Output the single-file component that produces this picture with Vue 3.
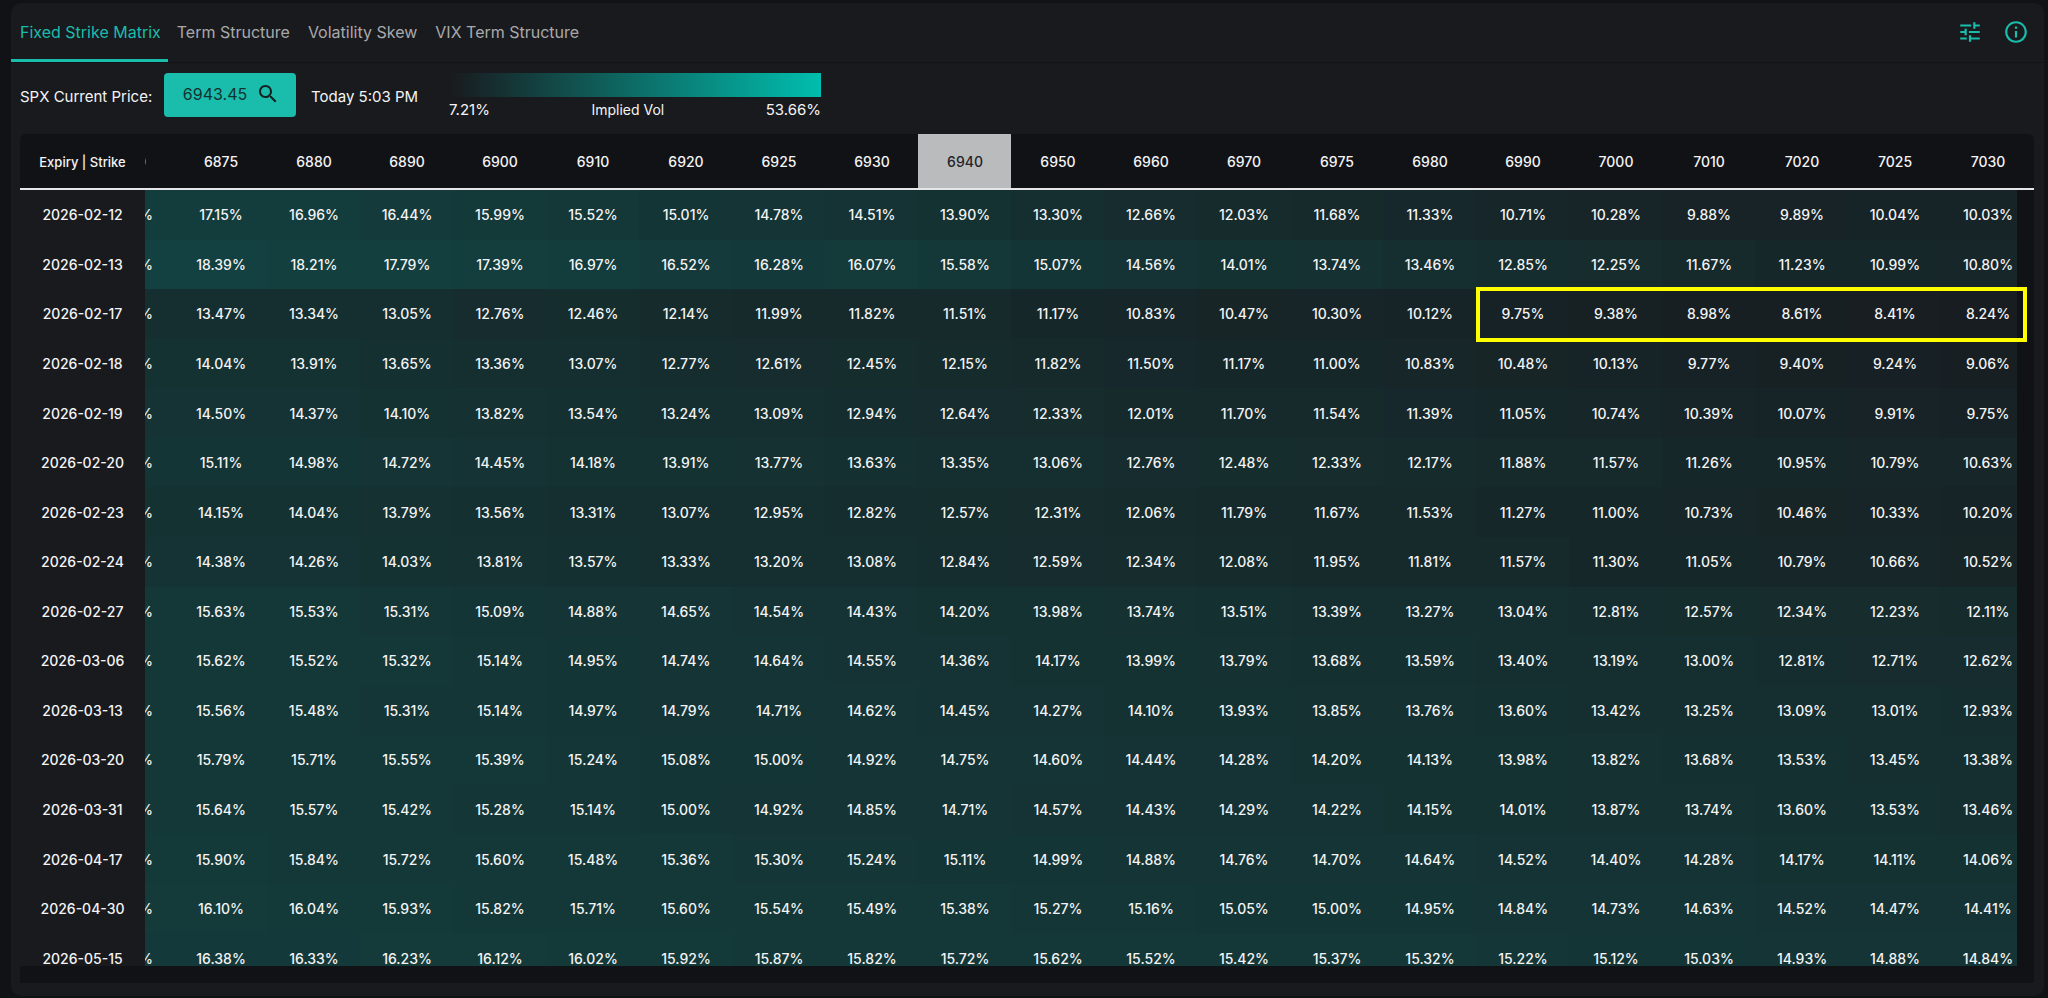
<script setup>
const tabs = ['Fixed Strike Matrix', 'Term Structure', 'Volatility Skew', 'VIX Term Structure']

const strikes = [6875, 6880, 6890, 6900, 6910, 6920, 6925, 6930, 6940, 6950, 6960, 6970, 6975, 6980, 6990, 7000, 7010, 7020, 7025, 7030]
const atmStrike = 6940

const source = `
2026-02-12 17.15 16.96 16.44 15.99 15.52 15.01 14.78 14.51 13.90 13.30 12.66 12.03 11.68 11.33 10.71 10.28 9.88 9.89 10.04 10.03
2026-02-13 18.39 18.21 17.79 17.39 16.97 16.52 16.28 16.07 15.58 15.07 14.56 14.01 13.74 13.46 12.85 12.25 11.67 11.23 10.99 10.80
2026-02-17 13.47 13.34 13.05 12.76 12.46 12.14 11.99 11.82 11.51 11.17 10.83 10.47 10.30 10.12 9.75 9.38 8.98 8.61 8.41 8.24
2026-02-18 14.04 13.91 13.65 13.36 13.07 12.77 12.61 12.45 12.15 11.82 11.50 11.17 11.00 10.83 10.48 10.13 9.77 9.40 9.24 9.06
2026-02-19 14.50 14.37 14.10 13.82 13.54 13.24 13.09 12.94 12.64 12.33 12.01 11.70 11.54 11.39 11.05 10.74 10.39 10.07 9.91 9.75
2026-02-20 15.11 14.98 14.72 14.45 14.18 13.91 13.77 13.63 13.35 13.06 12.76 12.48 12.33 12.17 11.88 11.57 11.26 10.95 10.79 10.63
2026-02-23 14.15 14.04 13.79 13.56 13.31 13.07 12.95 12.82 12.57 12.31 12.06 11.79 11.67 11.53 11.27 11.00 10.73 10.46 10.33 10.20
2026-02-24 14.38 14.26 14.03 13.81 13.57 13.33 13.20 13.08 12.84 12.59 12.34 12.08 11.95 11.81 11.57 11.30 11.05 10.79 10.66 10.52
2026-02-27 15.63 15.53 15.31 15.09 14.88 14.65 14.54 14.43 14.20 13.98 13.74 13.51 13.39 13.27 13.04 12.81 12.57 12.34 12.23 12.11
2026-03-06 15.62 15.52 15.32 15.14 14.95 14.74 14.64 14.55 14.36 14.17 13.99 13.79 13.68 13.59 13.40 13.19 13.00 12.81 12.71 12.62
2026-03-13 15.56 15.48 15.31 15.14 14.97 14.79 14.71 14.62 14.45 14.27 14.10 13.93 13.85 13.76 13.60 13.42 13.25 13.09 13.01 12.93
2026-03-20 15.79 15.71 15.55 15.39 15.24 15.08 15.00 14.92 14.75 14.60 14.44 14.28 14.20 14.13 13.98 13.82 13.68 13.53 13.45 13.38
2026-03-31 15.64 15.57 15.42 15.28 15.14 15.00 14.92 14.85 14.71 14.57 14.43 14.29 14.22 14.15 14.01 13.87 13.74 13.60 13.53 13.46
2026-04-17 15.90 15.84 15.72 15.60 15.48 15.36 15.30 15.24 15.11 14.99 14.88 14.76 14.70 14.64 14.52 14.40 14.28 14.17 14.11 14.06
2026-04-30 16.10 16.04 15.93 15.82 15.71 15.60 15.54 15.49 15.38 15.27 15.16 15.05 15.00 14.95 14.84 14.73 14.63 14.52 14.47 14.41
2026-05-15 16.38 16.33 16.23 16.12 16.02 15.92 15.87 15.82 15.72 15.62 15.52 15.42 15.37 15.32 15.22 15.12 15.03 14.93 14.88 14.84`

const rows = source.trim().split('\n').map((line) => {
  const [expiry, ...vols] = line.split(' ')
  return { expiry, vols }
})

const minVol = 7.21
const maxVol = 53.66
function shade(vol) {
  const share = (Number(vol) - minVol) / (maxVol - minVol)
  return { backgroundColor: `rgba(0, 190, 174, ${share.toFixed(3)})` }
}
</script>

<template>
  <main class="panel">
    <header class="topbar">
      <nav class="tabs" role="tablist">
        <button v-for="(tab, i) in tabs" :key="tab" type="button" role="tab" class="tab" :class="{ active: i === 0 }" :aria-selected="i === 0">{{ tab }}</button>
      </nav>
      <div class="actions">
        <button type="button" class="icon-button" aria-label="Settings">
          <svg viewBox="0 0 24 24"><path d="M3 17v2h6v-2H3zM3 5v2h10V5H3zm10 16v-2h8v-2h-8v-2h-2v6h2zM7 9v2H3v2h4v2h2V9H7zm14 4v-2H11v2h10zm-6-4h2V7h4V5h-4V3h-2v6z" /></svg>
        </button>
        <button type="button" class="icon-button" aria-label="Information">
          <svg viewBox="0 0 24 24"><path d="M11 7h2v2h-2zm0 4h2v6h-2zm1-9C6.48 2 2 6.48 2 12s4.48 10 10 10 10-4.48 10-10S17.52 2 12 2zm0 18c-4.41 0-8-3.59-8-8s3.59-8 8-8 8 3.59 8 8-3.59 8-8 8z" /></svg>
        </button>
      </div>
    </header>

    <section class="summary">
      <span class="price-label">SPX Current Price:</span>
      <button type="button" class="price">
        6943.45
        <svg viewBox="0 0 24 24"><path d="M15.5 14h-.79l-.28-.27C15.41 12.59 16 11.11 16 9.5 16 5.91 13.09 3 9.5 3S3 5.91 3 9.5 5.91 16 9.5 16c1.61 0 3.09-.59 4.23-1.57l.27.28v.79l5 4.99L20.49 19l-4.99-5zm-6 0C7.01 14 5 11.99 5 9.5S7.01 5 9.5 5 14 7.01 14 9.5 11.99 14 9.5 14z" /></svg>
      </button>
      <span class="time">Today 5:03 PM</span>
      <div class="legend">
        <div class="ramp"></div>
        <div class="scale"><span>7.21%</span><span class="scale-name">Implied Vol</span><span>53.66%</span></div>
      </div>
    </section>

    <section class="matrix">
      <div class="viewport">
        <table>
          <colgroup>
            <col class="col-expiry" />
            <col class="col-cut" />
            <col v-for="s in strikes" :key="s" />
          </colgroup>
          <thead>
            <tr>
              <th scope="col" class="corner">Expiry | Strike</th>
              <th scope="col" class="cut"><div>0</div></th>
              <th v-for="s in strikes" :key="s" scope="col" :class="{ atm: s === atmStrike }">{{ s }}</th>
            </tr>
          </thead>
          <tbody>
            <tr v-for="row in rows" :key="row.expiry">
              <th scope="row" class="expiry">{{ row.expiry }}</th>
              <td class="cut" :style="shade(row.vols[0])"><div>%</div></td>
              <td v-for="(v, i) in row.vols" :key="i" :style="shade(v)">{{ v }}%</td>
            </tr>
          </tbody>
        </table>
      </div>
      <div class="track-y"></div>
      <div class="track-x"></div>
      <div class="highlight"></div>
    </section>
  </main>
</template>

<style>
body {
  background: #111216;
}
</style>

<style scoped>
* {
  box-sizing: border-box;
}
.panel {
  margin: 3px 4px 0 11px;
  padding-bottom: 13px;
  background: #191a1e;
  border-radius: 10px;
  color: #f4f4f5;
  font: 500 14px/20px Inter, "Liberation Sans", sans-serif;
}
button {
  font: inherit;
  border: 0;
  padding: 0;
  background: none;
  cursor: pointer;
}
.topbar {
  display: flex;
  justify-content: space-between;
  height: 60px;
  border-bottom: 1px solid #121317;
}
.tabs {
  display: flex;
}
.tab {
  padding: 0 9px 2px;
  font-size: 16px;
  font-weight: 400;
  color: #a9a9ab;
}
.tab.active {
  padding-right: 7px;
  color: #1abdac;
  border-bottom: 3px solid #1abdac;
  border-top: 3px solid transparent;
}
.actions {
  display: flex;
  align-items: center;
  gap: 20px;
  padding: 0 15px 2px 0;
}
.icon-button {
  display: flex;
}
.icon-button svg {
  width: 26px;
  height: 26px;
  fill: #1abdac;
}
.summary {
  display: flex;
  align-items: center;
  height: 71px;
  padding: 0 9px 7px;
  font-size: 15px;
  font-weight: 400;
}
.price-label {
  width: 144px;
  padding-top: 3px;
}
.price {
  display: flex;
  align-items: center;
  justify-content: center;
  gap: 9px;
  width: 132px;
  height: 44px;
  padding-left: 3px;
  padding-bottom: 2px;
  border-radius: 4px;
  background: #1abdac;
  color: #12312f;
  font-size: 16px;
}
.price svg {
  width: 24px;
  height: 24px;
  fill: #12211f;
}
.time {
  width: 138px;
  padding-top: 3px;
  margin-left: 15px;
}
.legend {
  width: 372px;
  height: 46px;
}
.ramp {
  height: 24px;
  margin-top: 1px;
  background: linear-gradient(90deg, rgba(0, 190, 174, 0), rgb(0, 190, 174));
}
.scale {
  display: flex;
  justify-content: space-between;
  align-items: center;
  line-height: 26px;
}
.scale-name {
  font-size: 14px;
}
.matrix {
  position: relative;
  margin: 0 10px 0 9px;
  padding-bottom: 17px;
  border-radius: 6px 6px 0 0;
  background: #111216;
  overflow: hidden;
}
.viewport {
  height: 832px;
  overflow: hidden;
}
table {
  width: 100%;
  height: 849px;
  table-layout: fixed;
  border-collapse: separate;
  border-spacing: 0;
}
.col-expiry {
  width: 125px;
}
.col-cut {
  width: 29px;
}
th,
td {
  padding: 1px 0 0 1px;
  text-align: center;
  font-weight: 500;
}
thead th {
  height: 56px;
  padding-top: 2px;
  border-bottom: 2px solid #e6e6e8;
}
thead .corner {
  padding-left: 0;
  font-size: 13px;
}
thead .atm {
  background: #babbbd;
  color: #222326;
}
tbody {
  background: #191a1e;
}
tbody .expiry {
  padding-left: 0;
}
.cut,
thead .cut {
  padding-left: 0;
}
.cut div {
  display: flex;
  justify-content: flex-end;
  padding-right: 21px;
  overflow: hidden;
}
thead .cut div {
  padding-right: 28px;
}
.track-y {
  position: absolute;
  top: 56px;
  right: 0;
  bottom: 0;
  width: 17px;
  background: #111216;
}
.track-x {
  position: absolute;
  left: 0;
  right: 0;
  bottom: 0;
  height: 17px;
  background: #111216;
}
.highlight {
  position: absolute;
  top: 153px;
  right: 7px;
  width: 551px;
  height: 55px;
  border: 4px solid #ffff00;
}
</style>
